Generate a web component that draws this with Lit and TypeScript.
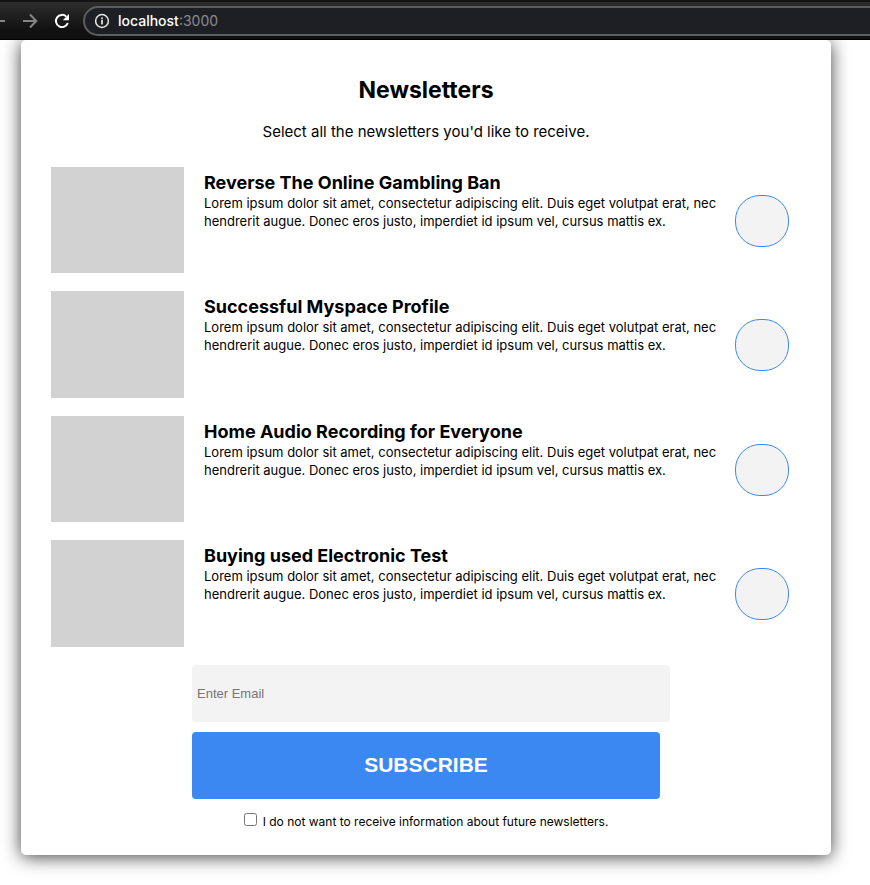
import { LitElement, html, css } from "lit";
import { customElement, property, state } from "lit/decorators.js";

interface Newsletter {
  id: string;
  title: string;
  description: string;
}

const DESCRIPTION =
  "Lorem ipsum dolor sit amet, consectetur adipiscing elit. Duis eget volutpat erat, nec hendrerit augue. Donec eros justo, imperdiet id ipsum vel, cursus mattis ex.";

const NEWSLETTERS: Newsletter[] = [
  { id: "gambling", title: "Reverse The Online Gambling Ban", description: DESCRIPTION },
  { id: "myspace", title: "Successful Myspace Profile", description: DESCRIPTION },
  { id: "audio", title: "Home Audio Recording for Everyone", description: DESCRIPTION },
  { id: "electronic", title: "Buying used Electronic Test", description: DESCRIPTION },
];

@customElement("browser-bar")
export class BrowserBar extends LitElement {
  static styles = css`
    :host {
      display: block;
      position: relative;
      overflow: hidden;
      font-family: Inter, "Liberation Sans", sans-serif;
    }
    .bar {
      display: flex;
      align-items: center;
      box-sizing: border-box;
      height: 40px;
      padding-top: 2px;
      border-bottom: 1px solid #000;
      background: linear-gradient(#131313 0 2px, #2d2d2d 2px, #121212 29px, #0f0f0f);
    }
    .nav {
      display: flex;
      flex: none;
      width: 83px;
      justify-content: flex-end;
    }
    button {
      flex: none;
      width: 32px;
      height: 32px;
      padding: 0;
      border: 0;
      background: none;
      color: #858585;
    }
    button.reload {
      margin-right: 5px;
      color: #fff;
    }
    svg {
      display: block;
      margin: auto;
      fill: none;
      stroke: currentColor;
      stroke-width: 2;
    }
    .address {
      display: flex;
      flex: 1;
      align-items: center;
      gap: 8px;
      box-sizing: border-box;
      height: 30px;
      margin-right: -20px;
      padding-left: 9px;
      border: 2px solid #5c5d5f;
      border-radius: 15px;
      background: #1e1f24;
      color: #e8e8e8;
      font-size: 14px;
      line-height: 20px;
    }
    .address svg {
      margin: 0;
    }
    .host {
      color: #fff;
      font-weight: 500;
    }
    .port {
      color: #8b8c8e;
    }
  `;

  render() {
    return html`
      <div class="bar">
        <div class="nav">
          <button aria-label="Back">
            <svg width="16" height="16" viewBox="0 0 16 16"><path d="M15 8H2M8 2L2 8l6 6" /></svg>
          </button>
          <button aria-label="Forward">
            <svg width="16" height="16" viewBox="0 0 16 16"><path d="M1 8h13M8 1.5L14.3 8 8 14.5" /></svg>
          </button>
          <button class="reload" aria-label="Reload">
            <svg width="16" height="16" viewBox="0 0 16 16">
              <path d="M13.8 10A6.1 6.1 0 1 1 12.3 3.6" />
              <path d="M15 1v6.2H8.8z" fill="currentColor" stroke="none" />
            </svg>
          </button>
        </div>
        <div class="address">
          <svg width="16" height="16" viewBox="0 0 16 16">
            <circle cx="8" cy="8" r="6.4" stroke-width="1.5" />
            <path d="M8 7v4.4M8 4.4v1.8" stroke-width="1.7" />
          </svg>
          <div><span class="host">localhost</span><span class="port">:3000</span></div>
        </div>
      </div>
    `;
  }
}

@customElement("newsletter-row")
export class NewsletterRow extends LitElement {
  @property({ attribute: false }) item!: Newsletter;
  @property({ type: Boolean }) selected = false;

  static styles = css`
    :host {
      display: block;
    }
    .row {
      display: flex;
      align-items: flex-start;
    }
    .thumb {
      flex: none;
      width: 133px;
      aspect-ratio: 5 / 4;
      margin-right: 20px;
      background: #d2d2d2;
    }
    .text {
      flex: 1;
      min-width: 0;
      padding-top: 5px;
    }
    h2 {
      margin: 0;
      font-size: 18px;
      font-weight: 700;
      line-height: 22px;
    }
    p {
      margin: 0;
      font-size: 13px;
      line-height: 18px;
    }
    input {
      flex: none;
      appearance: none;
      box-sizing: border-box;
      width: 54px;
      height: 52px;
      margin: 28px 12px 0 10px;
      border: 1px solid #3b88f2;
      border-radius: 25px;
      background: #f3f3f3;
    }
    input:checked {
      background: #3b88f2;
    }
  `;

  private toggle() {
    this.dispatchEvent(new CustomEvent("toggle-item", { detail: this.item.id }));
  }

  render() {
    return html`
      <div class="row">
        <div class="thumb"></div>
        <div class="text">
          <h2><label for="pick">${this.item.title}</label></h2>
          <p>${this.item.description}</p>
        </div>
        <input id="pick" type="checkbox" .checked=${this.selected} @change=${this.toggle} />
      </div>
    `;
  }
}

@customElement("app-root")
export class AppRoot extends LitElement {
  @state() private selected = new Set<string>();

  static styles = css`
    :host {
      display: block;
      min-height: 100vh;
      background: #fff;
      color: #000;
      font-family: Inter, "Liberation Sans", sans-serif;
    }
    browser-bar {
      z-index: 1;
    }
    .card {
      margin: 0 39px 0 21px;
      padding: 35px 30px 24px;
      border-radius: 5px;
      background: #fff;
      box-shadow: 0 2px 18px rgba(0, 0, 0, 0.75);
    }
    h1 {
      margin: 0;
      font-size: 23px;
      font-weight: 700;
      line-height: 30px;
      text-align: center;
    }
    .lead {
      margin: 16px 0 24px;
      font-size: 15px;
      line-height: 22px;
      text-align: center;
    }
    .list {
      display: grid;
      gap: 18px;
    }
    form {
      display: flex;
      flex-direction: column;
      gap: 10px;
      max-width: 468px;
      margin: 18px auto 0;
    }
    .email {
      width: 100%;
      height: 57px;
      padding: 0 5px;
      border: 0;
      border-radius: 4px;
      background: #f3f3f3;
      font-family: "Liberation Sans", Arial, sans-serif;
      font-size: 13px;
    }
    .email::placeholder {
      color: #757575;
    }
    .subscribe {
      height: 67px;
      padding: 0;
      border: 0;
      border-radius: 4px;
      background: #3b88f2;
      color: #fff;
      font-family: "Liberation Sans", Arial, sans-serif;
      font-size: 21px;
      font-weight: 700;
    }
    .optout {
      display: flex;
      justify-content: center;
      gap: 6px;
      padding-top: 4px;
      font-size: 12px;
      line-height: 18px;
    }
    .optout input {
      width: 13px;
      height: 13px;
      margin: 0;
    }
  `;

  private onToggle(event: CustomEvent<string>) {
    const next = new Set(this.selected);
    if (!next.delete(event.detail)) next.add(event.detail);
    this.selected = next;
  }

  private onSubmit(event: Event) {
    event.preventDefault();
  }

  render() {
    return html`
      <browser-bar></browser-bar>
      <main class="card">
        <h1>Newsletters</h1>
        <p class="lead">Select all the newsletters you'd like to receive.</p>
        <div class="list">
          ${NEWSLETTERS.map(
            (item) => html`<newsletter-row
              .item=${item}
              .selected=${this.selected.has(item.id)}
              @toggle-item=${this.onToggle}
            ></newsletter-row>`
          )}
        </div>
        <form @submit=${this.onSubmit}>
          <input class="email" type="email" placeholder="Enter Email" aria-label="Enter Email" />
          <button class="subscribe" type="submit">SUBSCRIBE</button>
          <label class="optout">
            <input type="checkbox" />
            <span>I do not want to receive information about future newsletters.</span>
          </label>
        </form>
      </main>
    `;
  }
}
